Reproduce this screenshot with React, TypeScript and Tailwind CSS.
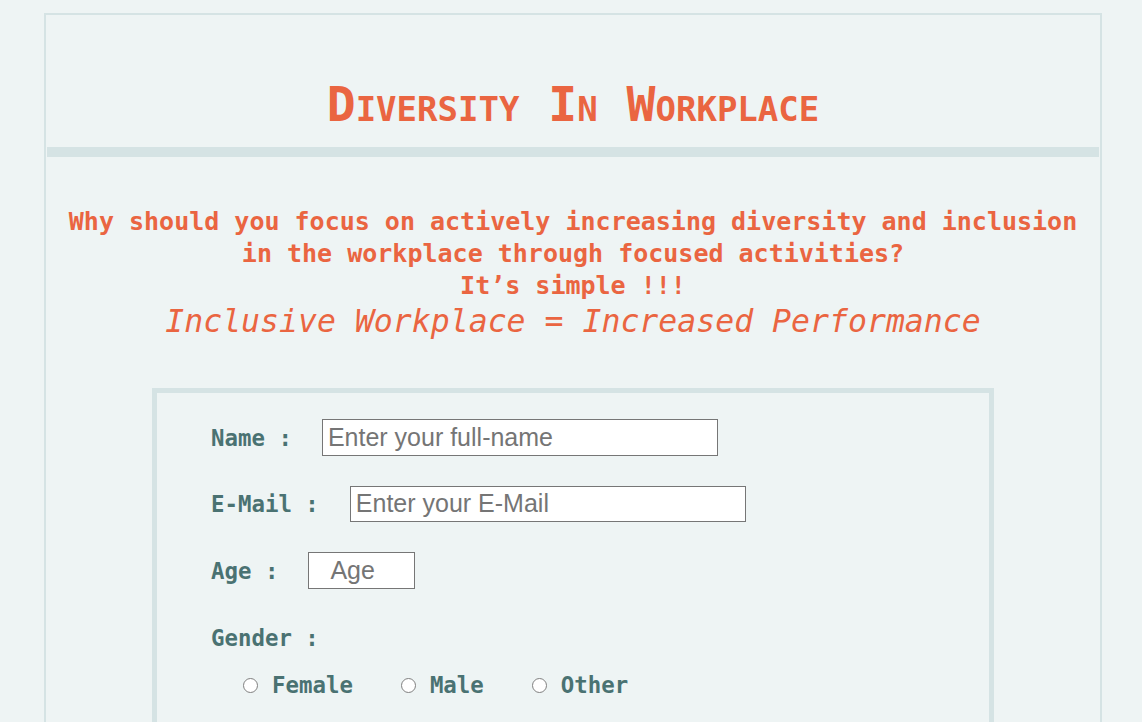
export default function App() {
  const mono = "font-['DejaVu_Sans_Mono',monospace]";
  return (
    <div className="min-h-[722px] bg-[#eef4f4] pt-[13px]">
      <div className={`ml-[44px] w-[1058px] border-2 border-[#d5e3e4] ${mono}`}>
        <header className="pt-[65px]">
          <h1 className="text-center text-[48px] leading-[48px] font-bold text-[#ea6541] [font-variant-caps:small-caps]">
            Diversity In Workplace
          </h1>
          <div className="mt-[19px] mx-px h-[10px] bg-[#d5e3e4]" />
        </header>

        <section className="mt-[49px] text-center text-[#ea6541]">
          <p className="text-[25px] leading-[32px] font-bold">
            Why should you focus on actively increasing diversity and inclusion
            <br />
            in the workplace through focused activities?
            <br />
            It’s simple !!!
          </p>
          <p className="text-[31.5px] leading-[38px] italic">
            Inclusive Workplace = Increased Performance
          </p>
        </section>

        <form className="mx-auto mt-[48px] w-[842px] border-[5px] border-[#d5e3e4] pl-[54px] pt-[26px] pb-[80px] text-[22.4px] font-bold text-[#4a7272]">
          <div className="flex h-[37px] items-center">
            <label className="leading-[26px]">Name :</label>
            <input
              type="text"
              placeholder="Enter your full-name"
              className="ml-[30px] h-[37px] w-[396px] border border-[#767676] bg-white pl-[5px] font-['Liberation_Sans',Arial,sans-serif] text-[25px] font-normal placeholder:text-[#757575]"
            />
          </div>

          <div className="mt-[30px] flex h-[36px] items-center">
            <label className="leading-[26px]">E-Mail :</label>
            <input
              type="email"
              placeholder="Enter your E-Mail"
              className="ml-[31px] h-[36px] w-[396px] border border-[#767676] bg-white pl-[5px] font-['Liberation_Sans',Arial,sans-serif] text-[25px] font-normal placeholder:text-[#757575]"
            />
          </div>

          <div className="mt-[30px] flex h-[37px] items-center">
            <label className="leading-[26px]">Age :</label>
            <input
              type="number"
              placeholder="Age"
              className="ml-[30px] h-[37px] w-[107px] border border-[#767676] bg-white pl-[21px] font-['Liberation_Sans',Arial,sans-serif] text-[25px] font-normal placeholder:text-[#757575]"
            />
          </div>

          <div className="mt-[30px] flex h-[37px] items-center">
            <span className="leading-[26px]">Gender :</span>
          </div>

          <div className="mt-[16px] ml-[32px] flex h-[26px] items-center gap-[48px]">
            {["Female", "Male", "Other"].map((g) => (
              <label key={g} className="flex items-center gap-[14px] leading-[26px]">
                <input
                  type="radio"
                  name="gender"
                  className="h-[15px] w-[15px] appearance-none rounded-full border-[1.5px] border-[#808080] bg-white"
                />
                {g}
              </label>
            ))}
          </div>
        </form>
      </div>
    </div>
  );
}
